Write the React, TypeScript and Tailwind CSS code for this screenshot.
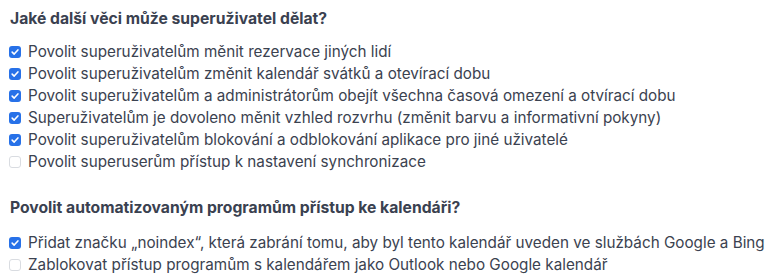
const sections = [
  {
    title: "Jaké další věci může superuživatel dělat?",
    items: [
      { label: "Povolit superuživatelům měnit rezervace jiných lidí", checked: true },
      { label: "Povolit superuživatelům změnit kalendář svátků a otevírací dobu", checked: true },
      { label: "Povolit superuživatelům a administrátorům obejít všechna časová omezení a otvírací dobu", checked: true },
      { label: "Superuživatelům je dovoleno měnit vzhled rozvrhu (změnit barvu a informativní pokyny)", checked: true },
      { label: "Povolit superuživatelům blokování a odblokování aplikace pro jiné uživatelé", checked: true },
      { label: "Povolit superuserům přístup k nastavení synchronizace", checked: false },
    ],
  },
  {
    title: "Povolit automatizovaným programům přístup ke kalendáři?",
    items: [
      {
        label: "Přidat značku „noindex“, která zabrání tomu, aby byl tento kalendář uveden ve službách Google a Bing",
        checked: true,
      },
      {
        label: "Zablokovat přístup programům s kalendářem jako Outlook nebo Google kalendář",
        checked: false,
      },
    ],
  },
];

function Checkbox({ checked }: { checked: boolean }) {
  if (!checked) {
    return <span className="h-[12px] w-[12px] shrink-0 rounded-[3px] border border-[#d9dce1] bg-white" />;
  }
  return (
    <span className="flex h-[12px] w-[12px] shrink-0 items-center justify-center rounded-[3px] bg-[#2771e8]">
      <svg viewBox="0 0 12 12" className="h-[10px] w-[10px]" fill="none">
        <path d="M2.6 6.2 L5 8.5 L9.5 3.5" stroke="white" strokeWidth="1.9" strokeLinecap="round" strokeLinejoin="round" />
      </svg>
    </span>
  );
}

export default function App() {
  return (
    <div className="min-h-[280px] w-[770px] bg-white px-[10px] pt-[8px] font-['Inter',sans-serif] text-[#3b4250]">
      {sections.map((s, i) => (
        <section key={i} className={i > 0 ? "mt-[24px]" : ""}>
          <h3
            className={`text-[15.7px] font-bold leading-[22px] text-[#3a4150] ${i > 0 ? "mb-[13px]" : "mb-[11px]"}`}
          >
            {s.title}
          </h3>
          <ul className="-ml-px">
            {s.items.map((it) => (
              <li key={it.label} className="flex h-[22px] items-center gap-[7px] text-[15.25px] leading-[22px]">
                <Checkbox checked={it.checked} />
                <span className="whitespace-nowrap">{it.label}</span>
              </li>
            ))}
          </ul>
        </section>
      ))}
    </div>
  );
}
